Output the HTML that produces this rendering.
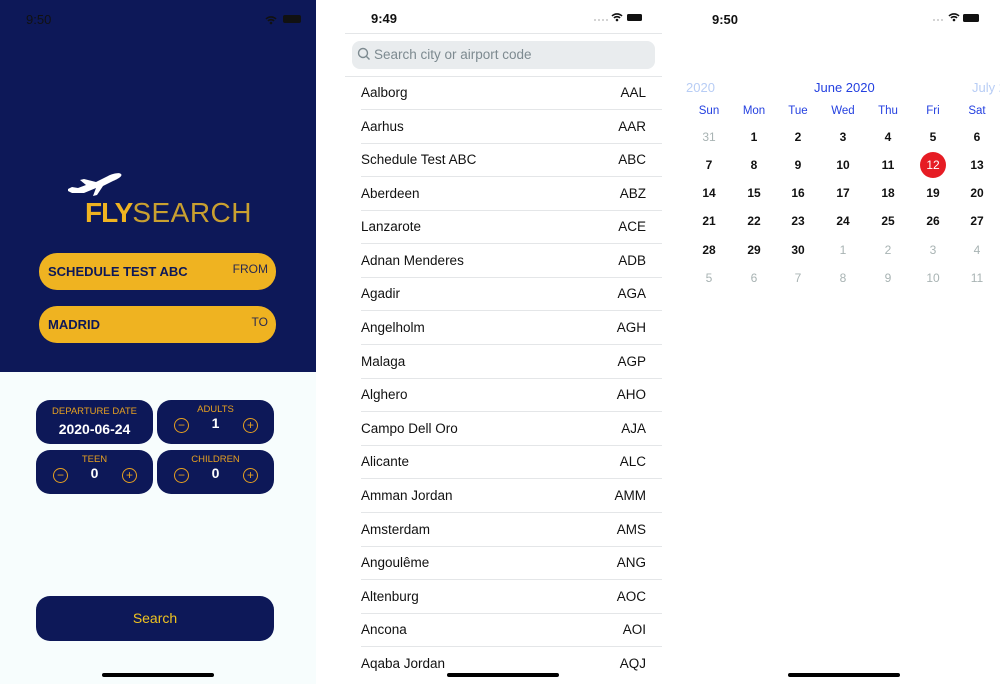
<!DOCTYPE html>
<html><head><meta charset="utf-8"><style>
*{margin:0;padding:0;box-sizing:border-box}
body{width:1000px;height:684px;overflow:hidden;position:relative;font-family:"Liberation Sans",sans-serif;background:#fff}
.a{position:absolute}
.nav{background:#0d1858}
.pill{position:absolute;left:39px;width:237px;height:37px;border-radius:18px;background:#efb321;color:#0d1858;font-weight:bold;font-size:13px;line-height:37px;padding-left:9px}
.pill span{position:absolute;right:8px;top:-2px;font-weight:normal;font-size:12px;color:#2a2a50}
.box{position:absolute;width:117px;height:44px;border-radius:14px;background:#0d1858;text-align:center}
.lbl{color:#e6a020;font-size:9.5px;margin-top:6px}
.val{color:#fff;font-weight:bold;font-size:14px}
.ct{position:absolute;top:18px;width:15px;height:15px;border:1.3px solid #e6a020;border-radius:50%;color:#e6a020;font-size:12px;line-height:12px;text-align:center}
.row{position:absolute;left:361px;width:301px;height:34px;font-size:13.5px;color:#111;line-height:34px;border-bottom:1px solid #e4e6e8}
.row b{position:absolute;right:16px;font-weight:normal}
.c{position:absolute;width:30px;text-align:center;font-size:12px;font-weight:bold;color:#111}
.g{color:#a8b3b3;font-weight:normal}
.w{position:absolute;width:40px;text-align:center;font-size:11.5px;color:#2440e0}
.home{position:absolute;height:4px;border-radius:2px;background:#000;top:673px}
</style></head><body>
<!-- left -->
<div class="a nav" style="left:0;top:0;width:316px;height:372px"></div>
<div class="a" style="left:0;top:372px;width:316px;height:312px;background:#f7fdfd"></div>
<div class="a" style="left:26px;top:12px;font-size:13px;color:#111">9:50</div>
<svg class="a" style="left:264px;top:14px" width="40" height="11"><path d="M2 5a7 7 0 0 1 10 0M4 7a4 4 0 0 1 6 0" stroke="#111" stroke-width="1.6" fill="none"/><circle cx="7" cy="9" r="1.3" fill="#111"/><rect x="19" y="1" width="18" height="8" rx="2" fill="#111"/></svg>
<svg class="a" style="left:66px;top:169px" width="60" height="30" viewBox="0 0 60 30"><path d="M2 20l4-2 6 1 8-3-6-5 4-1 12 3 12-6c4-2 11-4 13-2s-3 5-8 7l-10 5-6 9-4 1 3-8-12 5-12 0-4-2z" fill="#fff"/></svg>
<div class="a" style="left:85px;top:198px;font-size:28px;line-height:30px;letter-spacing:-1px;white-space:nowrap"><span style="color:#efb321;font-weight:bold">FLY</span><span style="color:#c9a030;font-weight:normal;letter-spacing:0.5px;-webkit-text-stroke:0">SEARCH</span></div>
<div class="pill" style="top:253px">SCHEDULE TEST ABC<span>FROM</span></div>
<div class="pill" style="top:306px">MADRID<span>TO</span></div>
<div class="box" style="left:36px;top:400px"><div class="lbl">DEPARTURE DATE</div><div class="val" style="margin-top:4px">2020-06-24</div></div>
<div class="box" style="left:157px;top:400px"><div class="lbl" style="margin-top:4px">ADULTS</div><div class="val">1</div><div class="ct" style="left:17px">−</div><div class="ct" style="left:86px">+</div></div>
<div class="box" style="left:36px;top:450px"><div class="lbl" style="margin-top:4px">TEEN</div><div class="val">0</div><div class="ct" style="left:17px">−</div><div class="ct" style="left:86px">+</div></div>
<div class="box" style="left:157px;top:450px"><div class="lbl" style="margin-top:4px">CHILDREN</div><div class="val">0</div><div class="ct" style="left:17px">−</div><div class="ct" style="left:86px">+</div></div>
<div class="a" style="left:36px;top:596px;width:238px;height:45px;border-radius:14px;background:#0d1858;color:#efc320;font-size:14px;line-height:45px;text-align:center">Search</div>
<div class="home" style="left:102px;width:112px"></div>
<!-- middle -->
<div class="a" style="left:371px;top:11px;font-size:13px;font-weight:bold;color:#111">9:49</div>
<svg class="a" style="left:594px;top:12px" width="56" height="11"><path d="M0 8h14" stroke="#aaa" stroke-dasharray="2 2"/><path d="M18 4a7 7 0 0 1 10 0M20 6a4 4 0 0 1 6 0" stroke="#111" stroke-width="1.6" fill="none"/><circle cx="23" cy="8" r="1.3" fill="#111"/><rect x="33" y="2" width="15" height="7" rx="1.5" fill="#111"/></svg>
<div class="a" style="left:345px;top:33px;width:317px;height:1px;background:#e4e6e8"></div>
<div class="a" style="left:352px;top:41px;width:303px;height:28px;border-radius:8px;background:#e9ecee;color:#7d8a90;font-size:13.5px;line-height:28px;padding-left:22px">Search city or airport code</div>
<svg class="a" style="left:357px;top:47px" width="14" height="14"><circle cx="6" cy="6" r="4.5" stroke="#7d8a90" stroke-width="1.4" fill="none"/><path d="M9.5 9.5l3 3" stroke="#7d8a90" stroke-width="1.4"/></svg>
<div class="a" style="left:345px;top:76px;width:317px;height:1px;background:#e4e6e8"></div>
<div class="row" style="top:76px">Aalborg<b>AAL</b></div>
<div class="row" style="top:110px">Aarhus<b>AAR</b></div>
<div class="row" style="top:143px">Schedule Test ABC<b>ABC</b></div>
<div class="row" style="top:177px">Aberdeen<b>ABZ</b></div>
<div class="row" style="top:210px">Lanzarote<b>ACE</b></div>
<div class="row" style="top:244px">Adnan Menderes<b>ADB</b></div>
<div class="row" style="top:277px">Agadir<b>AGA</b></div>
<div class="row" style="top:311px">Angelholm<b>AGH</b></div>
<div class="row" style="top:345px">Malaga<b>AGP</b></div>
<div class="row" style="top:378px">Alghero<b>AHO</b></div>
<div class="row" style="top:412px">Campo Dell Oro<b>AJA</b></div>
<div class="row" style="top:445px">Alicante<b>ALC</b></div>
<div class="row" style="top:479px">Amman Jordan<b>AMM</b></div>
<div class="row" style="top:513px">Amsterdam<b>AMS</b></div>
<div class="row" style="top:546px">Angoulême<b>ANG</b></div>
<div class="row" style="top:580px">Altenburg<b>AOC</b></div>
<div class="row" style="top:613px">Ancona<b>AOI</b></div>
<div class="row" style="top:647px;border:none">Aqaba Jordan<b>AQJ</b></div>
<div class="home" style="left:447px;width:112px"></div>
<!-- right -->
<div class="a" style="left:712px;top:12px;font-size:13px;font-weight:bold;color:#111">9:50</div>
<svg class="a" style="left:933px;top:12px" width="56" height="11"><path d="M0 8h12" stroke="#aaa" stroke-dasharray="2 2"/><path d="M16 4a7 7 0 0 1 10 0M18 6a4 4 0 0 1 6 0" stroke="#111" stroke-width="1.6" fill="none"/><circle cx="21" cy="8" r="1.3" fill="#111"/><rect x="30" y="2" width="16" height="8" rx="1.5" fill="#111"/></svg>
<div class="a" style="left:686px;top:80px;font-size:13px;color:#b8cdf5">2020</div>
<div class="a" style="left:814px;top:80px;font-size:13px;color:#2440e0">June 2020</div>
<div class="a" style="left:972px;top:80px;font-size:13px;color:#b8cdf5;white-space:nowrap">July 2</div>
<div class="a" style="left:920px;top:152px;width:26px;height:26px;border-radius:50%;background:#e61c24"></div>
<div id="cal"></div>
<script>
var xs=[709,754,798,843,888,933,977],d=["Sun","Mon","Tue","Wed","Thu","Fri","Sat"],h="";
d.forEach(function(t,i){h+='<div class="w" style="left:'+(xs[i]-20)+'px;top:105px">'+t+'</div>'});
var ys=[130,158,186,214,243,271];
for(var r=0;r<6;r++)for(var i=0;i<7;i++){var n=r*7+i;var v,g=false;if(n==0){v=31;g=true}else if(n<=30)v=n;else{v=n-30;g=true}
var col=(v==12&&!g)?'color:#fff;font-weight:normal;':'';
h+='<div class="c'+(g?' g':'')+'" style="'+col+'left:'+(xs[i]-15)+'px;top:'+ys[r]+'px">'+v+'</div>'}
document.getElementById('cal').innerHTML=h;
</script>
<div class="home" style="left:788px;width:112px"></div>
</body></html>
